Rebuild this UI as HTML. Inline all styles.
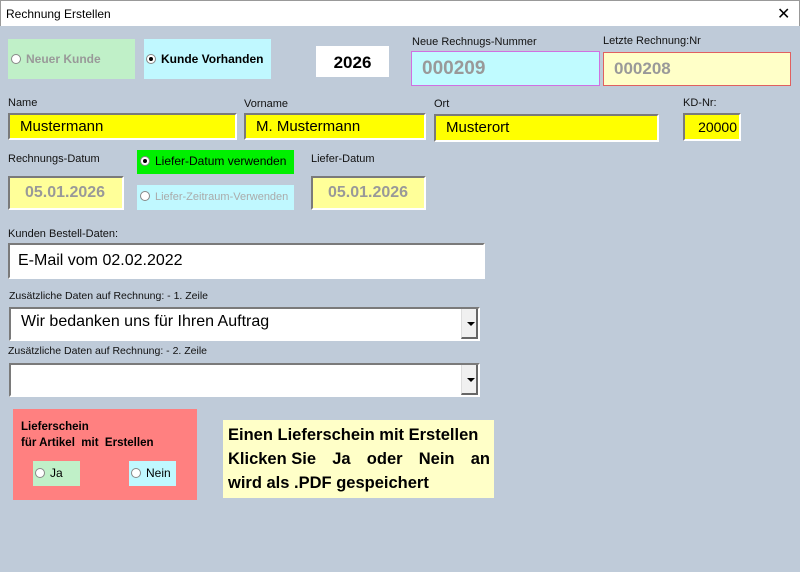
<!DOCTYPE html>
<html><head><meta charset="utf-8"><style>
*{margin:0;padding:0;box-sizing:border-box}
body{width:800px;height:572px;background:#bfcbd9;font-family:"Liberation Sans",sans-serif;position:relative;overflow:hidden;color:#000}
.a{position:absolute;white-space:nowrap}
.t{position:absolute;background:#fff;left:0;top:0;width:800px;height:26px;border:1px solid #999;border-bottom:none}
.lbl{position:absolute;font-size:11px;color:#111;white-space:nowrap}
.sunk{position:absolute;white-space:nowrap;border-top:2px solid #7a7a7a;border-left:2px solid #7a7a7a;border-bottom:2px solid #fff;border-right:2px solid #fff}
.y{background:#ffff00;font-size:15px;padding-left:10px;line-height:24px}
.ly{background:#ffff99;color:#999;font-weight:bold;font-size:16px;line-height:29px;padding-left:15px}
.rad{display:inline-block;width:10px;height:10px;border-radius:50%;background:#fff;border:1px solid #888;vertical-align:-1px;margin-right:5px;position:relative}
.rad.on:after{content:"";position:absolute;left:2px;top:2px;width:4px;height:4px;border-radius:50%;background:#000}
.dd{position:absolute;right:0;top:0;width:17px;height:100%;background:#f0f0f0;border-left:1px solid #ddd;border-right:2px solid #666;border-bottom:2px solid #666}
.dd:after{content:"";position:absolute;left:5px;top:13px;border-left:4px solid transparent;border-right:4px solid transparent;border-top:4px solid #000}
</style></head><body>
<div class="t"><span class="a" style="left:5px;top:6px;font-size:12px">Rechnung Erstellen</span><span class="a" style="left:776px;top:3px;font-size:16px">✕</span></div>

<div class="a" style="left:8px;top:39px;width:127px;height:40px;background:#c0f0c8;font-size:12px;font-weight:bold;color:#999;line-height:40px;padding-left:3px"><span class="rad"></span>Neuer Kunde</div>
<div class="a" style="left:144px;top:39px;width:127px;height:40px;background:#c0f8ff;font-size:12px;font-weight:bold;line-height:40px;padding-left:2px"><span class="rad on"></span>Kunde Vorhanden</div>
<div class="a" style="left:316px;top:46px;width:73px;height:31px;background:#fff;font-size:17px;font-weight:bold;text-align:center;line-height:33px">2026</div>

<div class="lbl" style="left:412px;top:36px">Neue Rechnugs-Nummer</div>
<div class="a" style="left:411px;top:51px;width:189px;height:35px;background:#c0fbff;border:1px solid #d070e0;color:#999;font-weight:bold;font-size:19px;line-height:33px;padding-left:10px">000209</div>
<div class="lbl" style="left:603px;top:35px">Letzte Rechnung:Nr</div>
<div class="a" style="left:603px;top:52px;width:188px;height:34px;background:#ffffc8;border:1px solid #e06060;color:#999;font-weight:bold;font-size:17px;line-height:32px;padding-left:10px">000208</div>

<div class="lbl" style="left:8px;top:97px">Name</div>
<div class="sunk y" style="left:8px;top:113px;width:229px;height:27px">Mustermann</div>
<div class="lbl" style="left:244px;top:98px">Vorname</div>
<div class="sunk y" style="left:244px;top:113px;width:182px;height:27px">M. Mustermann</div>
<div class="lbl" style="left:434px;top:98px">Ort</div>
<div class="sunk y" style="left:434px;top:114px;width:225px;height:28px">Musterort</div>
<div class="lbl" style="left:683px;top:97px">KD-Nr:</div>
<div class="sunk y" style="left:683px;top:113px;width:58px;height:28px;padding:0 2px 0 0;text-align:right;font-size:14px">20000</div>

<div class="lbl" style="left:8px;top:153px">Rechnungs-Datum</div>
<div class="sunk ly" style="left:8px;top:176px;width:116px;height:34px">05.01.2026</div>
<div class="a" style="left:137px;top:150px;width:157px;height:24px;background:#00f000;font-size:12px;line-height:23px;padding-left:3px"><span class="rad on"></span>Liefer-Datum verwenden</div>
<div class="a" style="left:137px;top:185px;width:157px;height:25px;background:#c0f8ff;font-size:11px;color:#aaa;line-height:25px;padding-left:3px;overflow:hidden"><span class="rad"></span>Liefer-Zeitraum-Verwenden</div>
<div class="lbl" style="left:311px;top:153px">Liefer-Datum</div>
<div class="sunk ly" style="left:311px;top:176px;width:115px;height:34px">05.01.2026</div>

<div class="lbl" style="left:8px;top:228px">Kunden Bestell-Daten:</div>
<div class="sunk" style="left:8px;top:243px;width:477px;height:36px;background:#fff;font-size:16px;line-height:31px;padding-left:8px">E-Mail vom 02.02.2022</div>

<div class="lbl" style="left:9px;top:290px;font-size:10.5px">Zusätzliche Daten auf Rechnung: - 1. Zeile</div>
<div class="sunk" style="left:9px;top:307px;width:471px;height:34px;background:#fff;font-size:16px;line-height:26px;padding-left:10px">Wir bedanken uns für Ihren Auftrag<div class="dd"></div></div>
<div class="lbl" style="left:8px;top:345px;font-size:10.5px">Zusätzliche Daten auf Rechnung: - 2. Zeile</div>
<div class="sunk" style="left:9px;top:363px;width:471px;height:34px;background:#fff"><div class="dd"></div></div>

<div class="a" style="left:13px;top:409px;width:184px;height:91px;background:#ff8080">
<div class="a" style="left:8px;top:10px;font-size:11.5px;font-weight:bold;line-height:16px;white-space:pre">Lieferschein
für Artikel  mit  Erstellen</div>
<div class="a" style="left:20px;top:52px;width:47px;height:25px;background:#c0f0c8;font-size:12px;line-height:25px;padding-left:2px"><span class="rad"></span>Ja</div>
<div class="a" style="left:116px;top:52px;width:47px;height:25px;background:#c0f8ff;font-size:12px;line-height:25px;padding-left:2px"><span class="rad"></span>Nein</div>
</div>
<div class="a" style="left:223px;top:420px;width:271px;height:78px;background:#ffffc8;font-size:16.5px;font-weight:bold;line-height:24px;padding:3px 4px 0 5px">
<div>Einen Lieferschein mit Erstellen</div>
<div style="display:flex;justify-content:space-between"><span>Klicken Sie</span><span>Ja</span><span>oder</span><span>Nein</span><span>an</span></div>
<div>wird als .PDF gespeichert</div>
</div>
</body></html>
